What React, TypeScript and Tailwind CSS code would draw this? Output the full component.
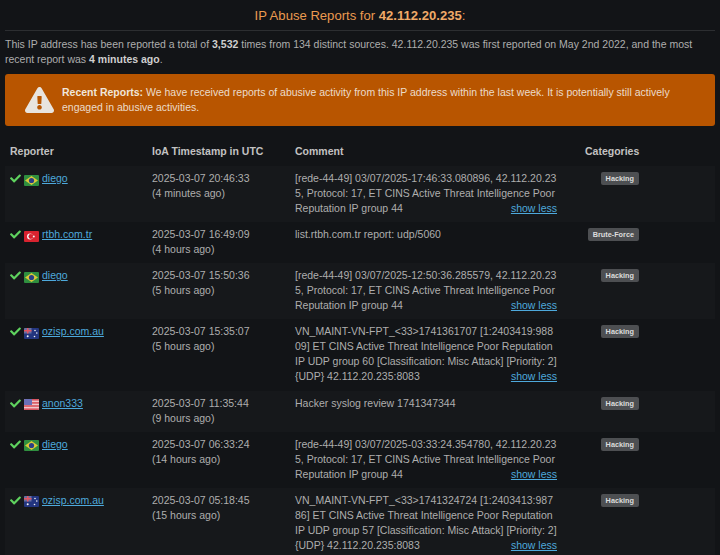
import { FaCheck, FaExclamationTriangle } from "react-icons/fa";

type Country = "br" | "tr" | "au" | "us";

interface Report {
  reporter: string;
  country: Country;
  time: string;
  ago: string;
  comment: string[];
  more?: boolean;
  category: string;
}

const REPORTS: Report[] = [
  {
    reporter: "diego",
    country: "br",
    time: "2025-03-07 20:46:33",
    ago: "(4 minutes ago)",
    comment: [
      "[rede-44-49] 03/07/2025-17:46:33.080896, 42.112.20.23",
      "5, Protocol: 17, ET CINS Active Threat Intelligence Poor",
      "Reputation IP group 44",
    ],
    more: true,
    category: "Hacking",
  },
  {
    reporter: "rtbh.com.tr",
    country: "tr",
    time: "2025-03-07 16:49:09",
    ago: "(4 hours ago)",
    comment: ["list.rtbh.com.tr report: udp/5060"],
    category: "Brute-Force",
  },
  {
    reporter: "diego",
    country: "br",
    time: "2025-03-07 15:50:36",
    ago: "(5 hours ago)",
    comment: [
      "[rede-44-49] 03/07/2025-12:50:36.285579, 42.112.20.23",
      "5, Protocol: 17, ET CINS Active Threat Intelligence Poor",
      "Reputation IP group 44",
    ],
    more: true,
    category: "Hacking",
  },
  {
    reporter: "ozisp.com.au",
    country: "au",
    time: "2025-03-07 15:35:07",
    ago: "(5 hours ago)",
    comment: [
      "VN_MAINT-VN-FPT_<33>1741361707 [1:2403419:988",
      "09] ET CINS Active Threat Intelligence Poor Reputation",
      "IP UDP group 60 [Classification: Misc Attack] [Priority: 2]",
      "{UDP} 42.112.20.235:8083",
    ],
    more: true,
    category: "Hacking",
  },
  {
    reporter: "anon333",
    country: "us",
    time: "2025-03-07 11:35:44",
    ago: "(9 hours ago)",
    comment: ["Hacker syslog review 1741347344"],
    category: "Hacking",
  },
  {
    reporter: "diego",
    country: "br",
    time: "2025-03-07 06:33:24",
    ago: "(14 hours ago)",
    comment: [
      "[rede-44-49] 03/07/2025-03:33:24.354780, 42.112.20.23",
      "5, Protocol: 17, ET CINS Active Threat Intelligence Poor",
      "Reputation IP group 44",
    ],
    more: true,
    category: "Hacking",
  },
  {
    reporter: "ozisp.com.au",
    country: "au",
    time: "2025-03-07 05:18:45",
    ago: "(15 hours ago)",
    comment: [
      "VN_MAINT-VN-FPT_<33>1741324724 [1:2403413:987",
      "86] ET CINS Active Threat Intelligence Poor Reputation",
      "IP UDP group 57 [Classification: Misc Attack] [Priority: 2]",
      "{UDP} 42.112.20.235:8083",
    ],
    more: true,
    category: "Hacking",
  },
];

function Flag({ country }: { country: Country }) {
  return (
    <svg width="15" height="11" viewBox="0 0 15 11" className="mt-[3px] shrink-0 rounded-[1px]">
      {country === "br" && (
        <>
          <rect width="15" height="11" fill="#2f8f3f" />
          <path d="M7.5 1 L14 5.5 L7.5 10 L1 5.5 Z" fill="#d9c83a" />
          <circle cx="7.5" cy="5.5" r="2.6" fill="#2b3f86" />
        </>
      )}
      {country === "tr" && (
        <>
          <rect width="15" height="11" fill="#d8232f" />
          <circle cx="6" cy="5.5" r="3" fill="#f5f5f5" />
          <circle cx="6.9" cy="5.5" r="2.4" fill="#d8232f" />
          <circle cx="9.8" cy="5.5" r="1" fill="#f5f5f5" />
        </>
      )}
      {country === "au" && (
        <>
          <rect width="15" height="11" fill="#23357f" />
          <rect width="7.5" height="5.5" fill="#6a6f9f" />
          <rect x="3" width="1.5" height="5.5" fill="#e25563" />
          <rect y="2" width="7.5" height="1.5" fill="#e25563" />
          <circle cx="3.7" cy="8.2" r="1" fill="#f2f2f2" />
          <circle cx="11" cy="2.5" r="0.8" fill="#f2f2f2" />
          <circle cx="12.8" cy="5" r="0.8" fill="#f2f2f2" />
          <circle cx="10.5" cy="8.5" r="0.8" fill="#f2f2f2" />
        </>
      )}
      {country === "us" && (
        <>
          <rect width="15" height="11" fill="#f0c8cc" />
          <rect y="0" width="15" height="1.6" fill="#d9545f" />
          <rect y="3.1" width="15" height="1.6" fill="#d9545f" />
          <rect y="6.2" width="15" height="1.6" fill="#d9545f" />
          <rect y="9.4" width="15" height="1.6" fill="#d9545f" />
          <rect width="8" height="6" fill="#6a70b8" />
        </>
      )}
    </svg>
  );
}

function ReportRow({ report, shaded }: { report: Report; shaded: boolean }) {
  return (
    <div
      className={`mx-[5px] grid grid-cols-[142px_143px_290px_1fr] pl-[5px] pt-[5px] pb-[6.15px] leading-[15px] ${
        shaded ? "bg-[#16181b]" : ""
      }`}
    >
      <div className="flex h-[15px] items-center">
        <FaCheck className="mr-[3px] h-[11px] w-[11px] text-[#5fd35f]" />
        <Flag country={report.country} />
        <a className="ml-[3px] text-[#4ea9dc] underline">{report.reporter}</a>
      </div>
      <div>
        {report.time}
        <br />
        {report.ago}
      </div>
      <div className="relative w-[262px] whitespace-nowrap">
        {report.comment.map((line) => (
          <div key={line}>{line}</div>
        ))}
        {report.more && (
          <a className="absolute right-0 bottom-0 text-[#4ea9dc] underline">
            show less
          </a>
        )}
      </div>
      <div className="flex w-[54px] justify-end whitespace-nowrap">
        <span className="mt-[1px] h-[13px] rounded-[2px] bg-[#4d4f52] px-[5px] text-[7.3px] leading-[13px] font-bold text-[#dcdcdc]">
          {report.category}
        </span>
      </div>
    </div>
  );
}

export default function App() {
  return (
    <div className="h-[555px] w-[720px] overflow-hidden bg-[#121417] font-['Liberation_Sans',Arial,sans-serif] text-[10.5px] text-[#aeaeae]">
      <h1 className="pt-[7px] pb-[5px] text-center text-[13.1px] leading-[18px] text-[#eb9a50]">
        IP Abuse Reports for <b className="text-[#f0aa68]">42.112.20.235</b>:
      </h1>
      <hr className="mx-[5px] border-[#2c2e31]" />
      <p className="mx-[5px] mt-[6px] leading-[15px]">
        This IP address has been reported a total of{" "}
        <b className="text-[#cfcfcf]">3,532</b> times from 134 distinct sources.
        42.112.20.235 was first reported on May 2nd 2022, and the most recent
        report was <b className="text-[#cfcfcf]">4 minutes ago</b>.
      </p>
      <div className="mx-[5px] mt-[7px] flex h-[52px] items-center rounded-[3px] bg-[#b85500] pr-[15px] text-[#ecdccb]">
        <FaExclamationTriangle className="ml-[20px] h-[26px] w-[29px] shrink-0 text-[#e8e4df]" />
        <p className="ml-[8px] leading-[15px]">
          <b className="text-[#f0e6da]">Recent Reports:</b> We have received
          reports of abusive activity from this IP address within the last week.
          It is potentially still actively engaged in abusive activities.
        </p>
      </div>
      <div className="mt-[18px] grid grid-cols-[142px_143px_290px_1fr] pb-[7px] pl-[10px] leading-[15px] font-bold text-[#c2c2c2]">
        <div>Reporter</div>
        <div>IoA Timestamp in UTC</div>
        <div>Comment</div>
        <div>Categories</div>
      </div>
      {REPORTS.map((report, i) => (
        <ReportRow key={report.time} report={report} shaded={i % 2 === 0} />
      ))}
    </div>
  );
}
